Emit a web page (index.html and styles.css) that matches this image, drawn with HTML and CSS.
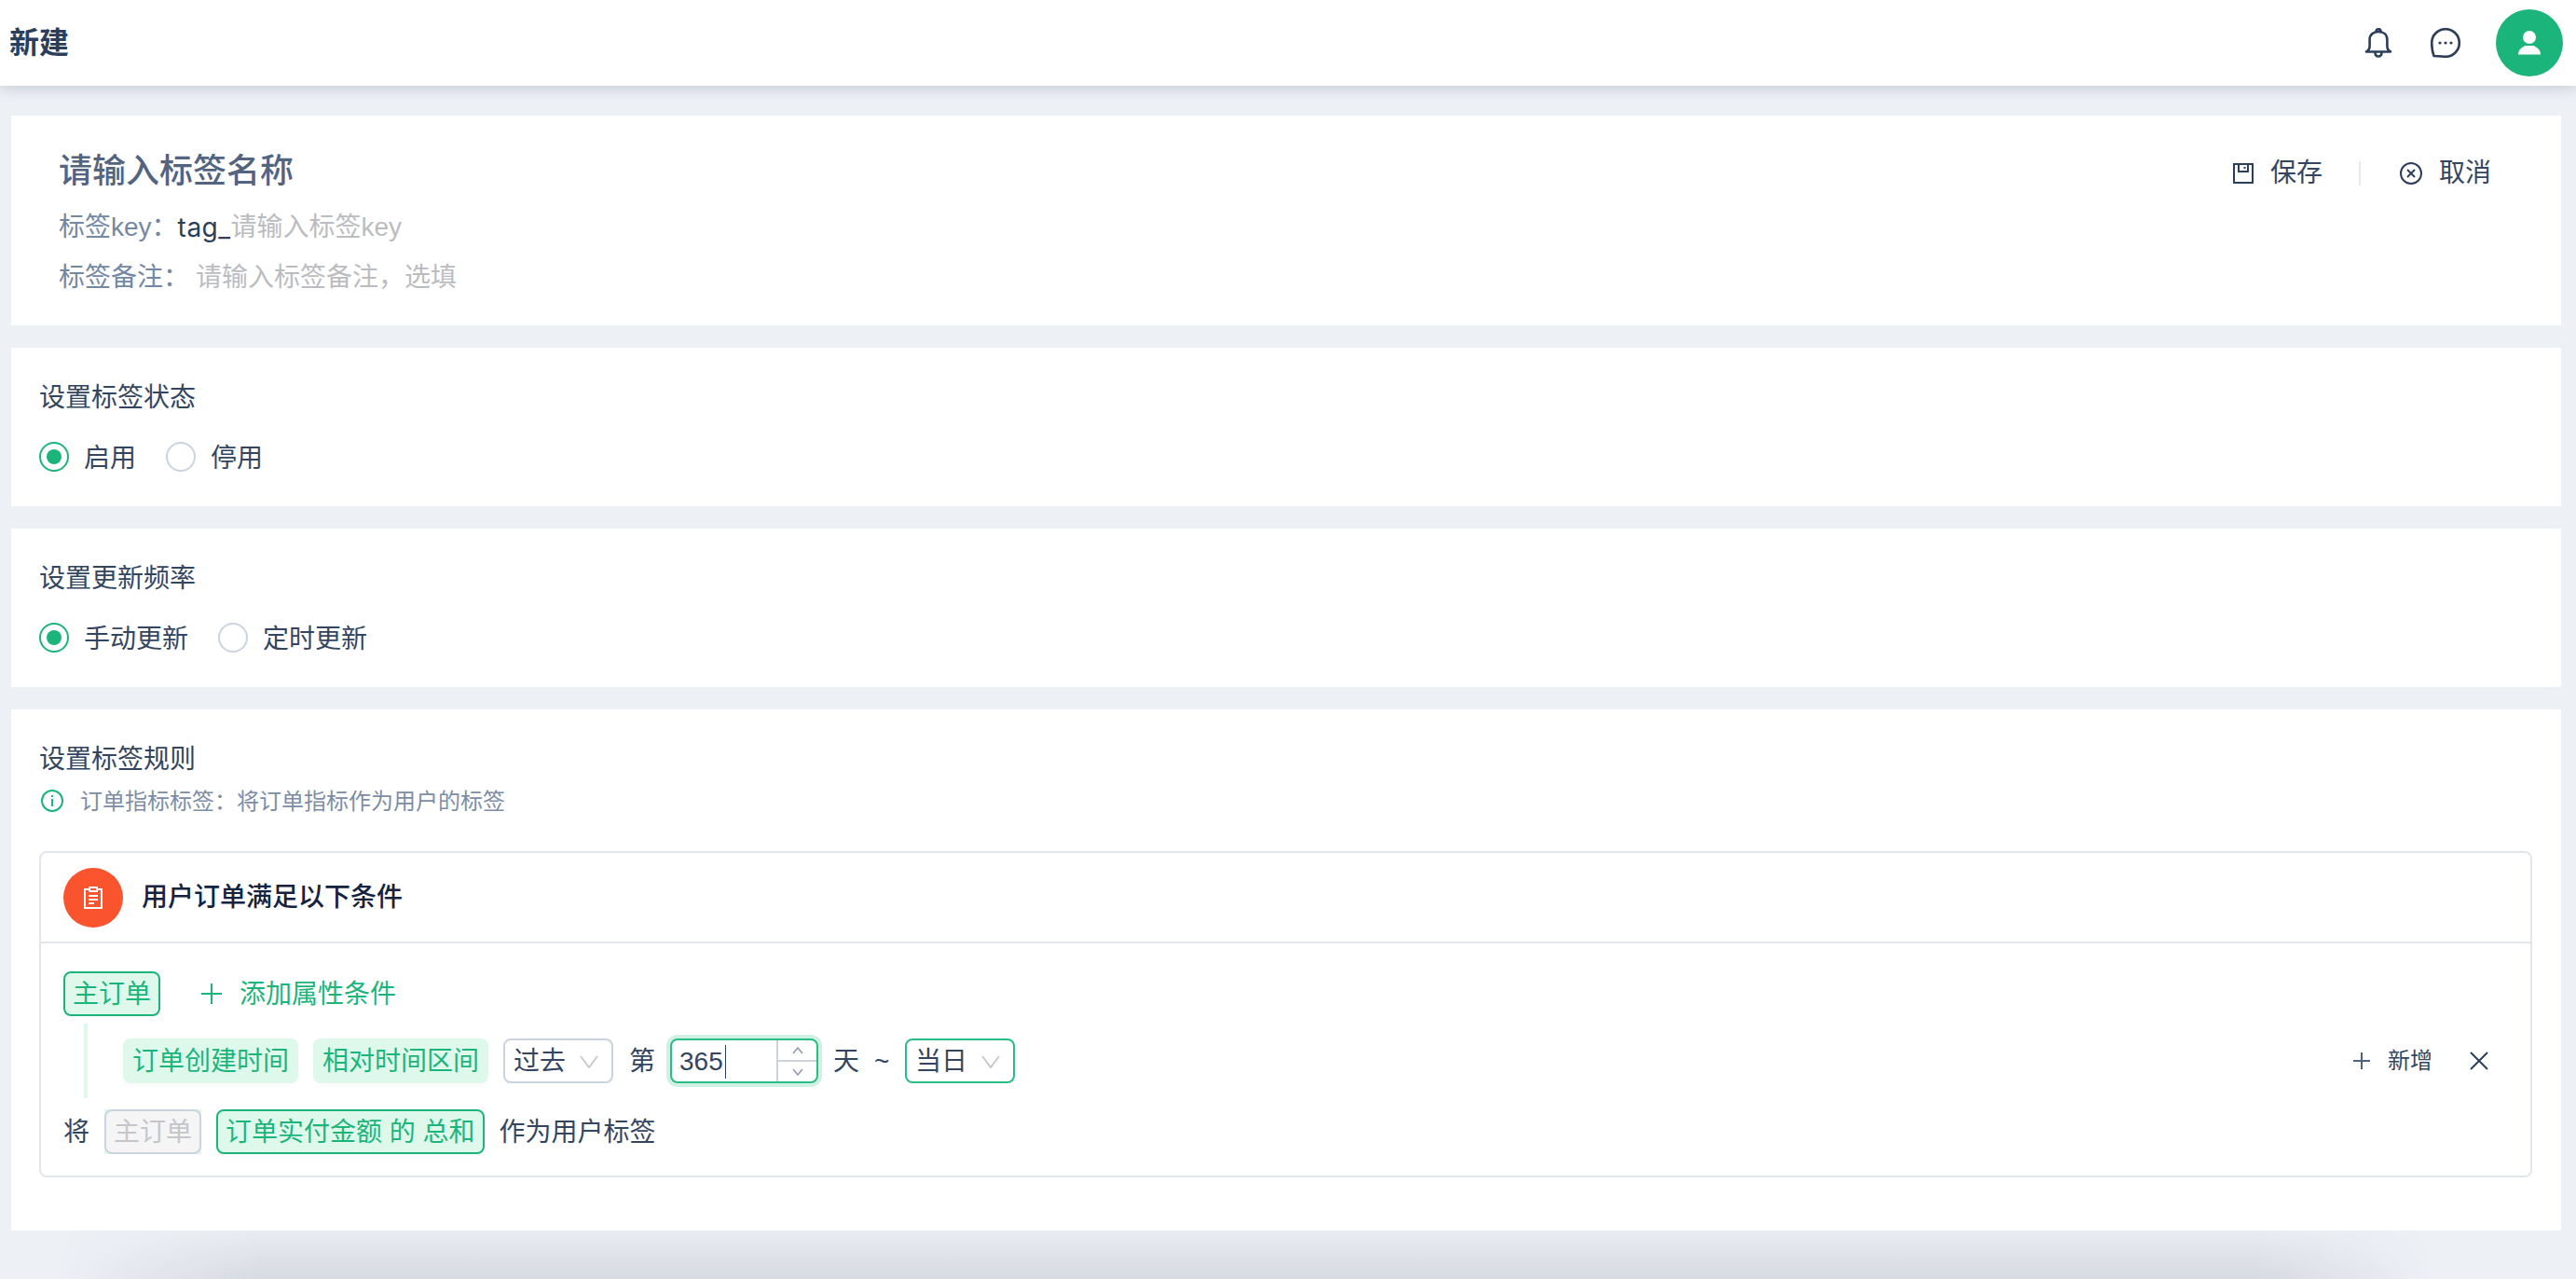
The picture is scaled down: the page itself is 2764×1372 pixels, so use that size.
FILE: index.html
```html
<!DOCTYPE html>
<html lang="zh-CN">
<head>
<meta charset="utf-8">
<title>新建</title>
<link rel="stylesheet" href="styles.css">
</head>
<body>
<header class="topbar">
  <div class="topbar-title">新建</div>
  <div class="topbar-tools">
    <svg class="tool-icon tool-bell" viewBox="0 0 32 32" fill="none" stroke="#2c3e5a" stroke-width="2.600" stroke-linejoin="round" stroke-linecap="round"><path d="M3 25.500c2.600-1.400 3.600-3.200 3.600-6v-7C6.600 7.300 10.400 4 16 4s9.400 3.300 9.400 8.500v7c0 2.800 1 4.600 3.600 6z"/><path d="M13.500 4c0-1.700 1-2.800 2.500-2.800s2.500 1.100 2.500 2.800"/><path d="M12.500 26c0 2.800 1.500 4.500 3.500 4.500s3.500-1.700 3.500-4.500"/></svg>
    <svg class="tool-icon" viewBox="0 0 32 32" fill="none"><path d="M3.500 30C2 26 1.200 21 1.200 16A14.800 14.800 0 1 1 16 30.800z" stroke="#2c3e5a" stroke-width="2.600" stroke-linejoin="round"/><circle cx="10" cy="16" r="1.600" fill="#2c3e5a"/><circle cx="16" cy="16" r="1.600" fill="#2c3e5a"/><circle cx="22" cy="16" r="1.600" fill="#2c3e5a"/></svg>
    <div class="avatar">
      <svg width="24" height="26" viewBox="0 0 24 26" fill="#fff"><ellipse cx="12" cy="7" rx="7" ry="7"/><path d="M0 25.500c0-5 3.500-7.500 7.500-9.500h9c4 2 7.500 4.500 7.500 9.500z"/></svg>
    </div>
  </div>
</header>

<main class="page">
  <section class="card card-head">
    <div class="head-fields">
      <div class="tag-name">请输入标签名称</div>
      <div class="field-row field-key"><span class="muted">标签key：</span><span class="prefix">tag_</span><span class="placeholder">请输入标签key</span></div>
      <div class="field-row"><span class="muted note-label">标签备注：</span><span class="placeholder">请输入标签备注，选填</span></div>
    </div>
    <div class="head-actions">
      <button class="action">
        <svg width="22" height="22" viewBox="0 0 22 22" fill="none" stroke="#2c3e5a" stroke-width="2"><path d="M1 1h20v20H1z"/><path d="M6 1v8h10V1"/><path d="M12.500 4v2" /></svg>
        <span>保存</span>
      </button>
      <i class="action-sep"></i>
      <button class="action">
        <svg width="24" height="24" viewBox="0 0 24 24" fill="none" stroke="#2c3e5a" stroke-width="2"><circle cx="12" cy="12" r="11"/><path d="M8 8l8 8M16 8l-8 8"/></svg>
        <span>取消</span>
      </button>
    </div>
  </section>

  <section class="card">
    <div class="card-title">设置标签状态</div>
    <div class="radio-group">
      <label class="radio is-on"><i class="radio-dot"></i><span>启用</span></label>
      <label class="radio"><i class="radio-dot"></i><span>停用</span></label>
    </div>
  </section>

  <section class="card">
    <div class="card-title">设置更新频率</div>
    <div class="radio-group">
      <label class="radio is-on"><i class="radio-dot"></i><span>手动更新</span></label>
      <label class="radio"><i class="radio-dot"></i><span>定时更新</span></label>
    </div>
  </section>

  <section class="card card-rule">
    <div class="card-title">设置标签规则</div>
    <div class="hint">
      <svg width="24" height="24" viewBox="0 0 24 24" fill="none" stroke="#1bb57b" stroke-width="2"><circle cx="12" cy="12" r="11"/><path d="M12 10v8M12 6v2"/></svg>
      <span>订单指标标签：将订单指标作为用户的标签</span>
    </div>

    <div class="rule-box">
      <div class="rule-head">
        <div class="rule-badge">
          <svg width="20" height="24" viewBox="0 0 20 24" fill="none" stroke="#fff" stroke-width="2"><path d="M6 3H1v20h18V3h-5"/><path d="M6 1h8v4H6z"/><path d="M5 10h10M5 14h10M5 18h6"/></svg>
        </div>
        <div class="rule-title">用户订单满足以下条件</div>
      </div>
      <div class="rule-body">
        <div class="rule-row">
          <span class="chip chip-line">主订单</span>
          <button class="add-attr">
            <svg width="22" height="22" viewBox="0 0 22 22" stroke="#1bb57b" stroke-width="2"><path d="M11 0v22M0 11h22"/></svg>
            <span>添加属性条件</span>
          </button>
        </div>
        <div class="rule-branch">
          <div class="rule-row cond">
            <span class="chip chip-fill">订单创建时间</span>
            <span class="chip chip-fill">相对时间区间</span>
            <div class="select"><span>过去</span><svg class="chev" width="20" height="14" viewBox="0 0 20 14" fill="none" stroke="#c5c9d2" stroke-width="2"><path d="M1 1l9 12 9-12"/></svg></div>
            <span class="word word-di">第</span>
            <div class="number">
              <div class="number-value"><span>365</span><i class="caret"></i></div>
              <div class="number-steps">
                <div class="step"><svg width="12" height="8" viewBox="0 0 12 8" fill="none" stroke="#8d99ac" stroke-width="1.500"><path d="M1 7l5-6 5 6"/></svg></div>
                <div class="step"><svg width="12" height="8" viewBox="0 0 12 8" fill="none" stroke="#8d99ac" stroke-width="1.500"><path d="M1 1l5 6 5-6"/></svg></div>
              </div>
            </div>
            <span class="word">天</span>
            <span class="word word-tilde">~</span>
            <div class="select select-today"><span>当日</span><svg class="chev" width="20" height="14" viewBox="0 0 20 14" fill="none" stroke="#c5c9d2" stroke-width="2"><path d="M1 1l9 12 9-12"/></svg></div>
            <div class="row-actions">
              <button class="row-add">
                <svg width="18" height="18" viewBox="0 0 18 18" stroke="#4f6282" stroke-width="2"><path d="M9 0v18M0 9h18"/></svg>
                <span>新增</span>
              </button>
              <button class="row-del">
                <svg width="20" height="20" viewBox="0 0 20 20" stroke="#2c3e5a" stroke-width="2"><path d="M1 1l18 18M19 1L1 19"/></svg>
              </button>
            </div>
          </div>
        </div>
        <div class="rule-row result">
          <span class="word">将</span>
          <span class="chip-off-wrap"><span class="chip chip-off">主订单</span></span>
          <span class="chip chip-line">订单实付金额 的 总和</span>
          <span class="word">作为用户标签</span>
        </div>
      </div>
    </div>
  </section>
</main>
<div class="bottom-shade"></div>
</body>
</html>
```
FILE: styles.css
```css
* { box-sizing: border-box; }
html, body { margin: 0; padding: 0; }
body {
  position: relative;
  width: 2764px;
  height: 1372px;
  overflow: hidden;
  background: #edf0f5;
  color: #34465f;
  font-family: "Liberation Sans", "Noto Sans CJK SC", sans-serif;
  font-size: 28px;
  line-height: 40px;
}
button { border: 0; background: none; padding: 0; margin: 0; font: inherit; color: inherit; display: flex; align-items: center; }
i { display: block; font-style: normal; }

.topbar {
  position: relative;
  display: flex;
  align-items: center;
  justify-content: space-between;
  height: 92px;
  padding: 0 14px 0 10px;
  background: #fff;
  box-shadow: 0 2px 14px rgba(44, 62, 90, 0.22);
}
.topbar-title { font-size: 32px; font-weight: 700; color: #2c3e5a; }
.topbar-tools { display: flex; align-items: center; }
.tool-icon { width: 32px; height: 32px; margin-right: 38px; }
.tool-bell { margin-right: 40px; }
.avatar {
  display: flex; align-items: center; justify-content: center;
  width: 72px; height: 72px; border-radius: 50%; background: #1bb57b;
}

.page { display: flex; flex-direction: column; gap: 24px; padding: 32px 16px 0 12px; }
.card { background: #fff; padding: 32px 30px 33px; }
.card-title { height: 40px; line-height: 44px; }

.card-head { display: flex; justify-content: space-between; align-items: flex-start; height: 225px; padding: 36px 75px 0 51px; }
.tag-name { height: 46px; font-size: 36px; line-height: 48px; font-weight: 500; color: #526480; }
.field-row { display: flex; height: 40px; line-height: 42px; margin-top: 14px; }
.field-key { margin-top: 17px; }
.muted { color: #7488a3; }
.prefix { color: #2c3e5a; font-family: Inter, "Liberation Sans", sans-serif; letter-spacing: 0.5px; }
.placeholder { color: #bbbcbf; }
.note-label { width: 147px; }
.head-actions { display: flex; align-items: center; margin-top: 6px; }
.action { gap: 18px; height: 40px; line-height: 44px; }
.action-sep { width: 2px; height: 26px; margin: 0 42px 0 39px; background: #e6e8ec; }

.radio-group { display: flex; gap: 32px; margin-top: 25px; }
.radio { display: flex; align-items: center; height: 40px; gap: 16px; }
.radio span { padding-top: 4px; }
.radio-dot { position: relative; width: 32px; height: 32px; border: 2px solid #cbd3de; border-radius: 50%; }
.is-on .radio-dot { border-color: #1bb57b; }
.is-on .radio-dot::after { content: ""; position: absolute; left: 6px; top: 6px; width: 16px; height: 16px; border-radius: 50%; background: #1bb57b; }

.card-rule { height: 559px; padding-bottom: 0; }
.hint { display: flex; align-items: center; gap: 18px; height: 36px; margin-top: 8px; padding-left: 2px; font-size: 24px; color: #7c8da5; }
.hint span { padding-top: 1px; }
.rule-box { margin-top: 36px; margin-right: 1px; border: 2px solid #e2e6eb; border-radius: 8px; }
.rule-head { display: flex; align-items: center; gap: 20px; height: 97px; padding-left: 24px; border-bottom: 2px solid #e2e6eb; }
.rule-badge { display: flex; align-items: center; justify-content: center; width: 64px; height: 64px; border-radius: 50%; background: #f9542d; }
.rule-title { font-weight: 500; color: #14233f; }
.rule-body { padding: 30px 45px 23px 24px; }
.rule-row { display: flex; align-items: center; }

.chip { display: flex; align-items: center; height: 48px; padding: 2px 10px 0; border-radius: 8px; white-space: pre; box-shadow: 0 4px 6px rgba(0, 0, 0, 0.02); }
.chip-line { background: #def9ec; border: 2px solid #1bb57b; color: #1bb57b; padding: 1px 8px 0; }
.chip-fill { background: #def9ec; color: #1bb57b; }
.chip-off { background: #f5f5f5; border: 2px solid #cbd3de; color: #c5c6c9; padding: 1px 8px 0; box-shadow: none; }
.chip-off-wrap { display: block; background: #def9ec; }

.add-attr { gap: 19px; margin-left: 44px; color: #1bb57b; }
.add-attr span { padding-top: 2px; }
.rule-branch { margin: 8px 0 0 22px; padding: 16px 0 16px 38px; height: 80px; border-left: 4px solid #def9ec; }
.cond { gap: 16px; }

.select { display: flex; align-items: center; justify-content: space-between; width: 118px; height: 48px; padding: 2px 14px 0 9px; background: #fff; border: 2px solid #cbd3de; border-radius: 8px; }
.select-today { border-color: #28bd85; }
.word { white-space: nowrap; padding-top: 2px; }
.word-di { margin-left: 1px; }
.word-tilde { width: 17px; }
.result { margin-top: 12px; gap: 16px; }

.number { display: flex; width: 159px; height: 48px; border: 2px solid #28bd85; border-radius: 8px; box-shadow: 0 0 0 4px #d0f0e3; background: #fff; overflow: hidden; }
.number-value { display: flex; align-items: center; flex: 1; padding: 1px 0 0 8px; }
.caret { width: 1px; height: 36px; margin-left: 2px; background: #2c3e5a; }
.number-steps { display: flex; flex-direction: column; width: 43px; border-left: 2px solid #cbd3de; }
.step { display: flex; align-items: center; justify-content: center; flex: 1; }
.step + .step { border-top: 2px solid #cbd3de; }

.row-actions { display: flex; align-items: center; margin-left: auto; }
.row-add { gap: 19px; font-size: 24px; }
.row-del { margin-left: 40px; }

.bottom-shade {
  position: absolute;
  left: 0;
  right: 0;
  bottom: 0;
  height: 52px;
  background: linear-gradient(to top, rgba(40, 50, 65, 0.115), rgba(40, 50, 65, 0.02));
  -webkit-mask-image: linear-gradient(to right, transparent 60px, #000 280px, #000 2420px, transparent 2610px);
  mask-image: linear-gradient(to right, transparent 60px, #000 280px, #000 2420px, transparent 2610px);
  pointer-events: none;
}
```
